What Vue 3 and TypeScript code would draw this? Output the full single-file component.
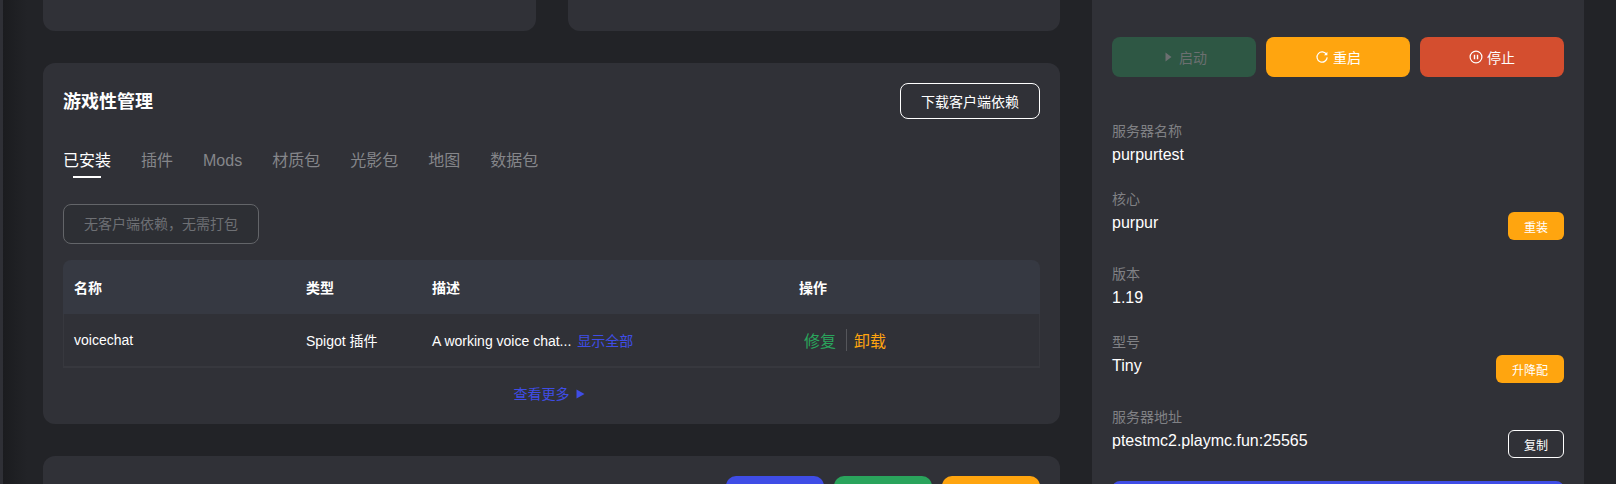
<script setup lang="ts">
interface Info { label: string; value: string; action?: string; kind?: string }
const tabs: string[] = ['已安装', '插件', 'Mods', '材质包', '光影包', '地图', '数据包']
const infos: Info[] = [
  { label: '服务器名称', value: 'purpurtest' },
  { label: '核心', value: 'purpur', action: '重装', kind: 'fill' },
  { label: '版本', value: '1.19' },
  { label: '型号', value: 'Tiny', action: '升降配', kind: 'fill' },
  { label: '服务器地址', value: 'ptestmc2.playmc.fun:25565', action: '复制', kind: 'line' },
]
</script>

<template>
  <div class="page">
    <div class="edge"></div>
    <main class="main">
      <div class="top-row">
        <div class="card stub"></div>
        <div class="card stub"></div>
      </div>

      <section class="card game">
        <header class="game-head">
          <h2>游戏性管理</h2>
          <button class="outline-btn">下载客户端依赖</button>
        </header>
        <nav class="tabs">
          <span v-for="(t, i) in tabs" :key="t" class="tab" :class="{ active: i === 0 }">{{ t }}</span>
        </nav>
        <div class="hint">无客户端依赖，无需打包</div>
        <div class="table">
          <div class="tr th">
            <div>名称</div><div>类型</div><div>描述</div><div>操作</div>
          </div>
          <div class="tr td">
            <div>voicechat</div>
            <div>Spigot 插件</div>
            <div>A working voice chat... <a class="link">显示全部</a></div>
            <div class="ops"><span class="fix">修复</span><i class="sep"></i><span class="del">卸载</span></div>
          </div>
        </div>
        <div class="more">查看更多<svg width="9" height="10" viewBox="0 0 9 10"><path d="M0.5 0.5 L8.5 5 L0.5 9.5 Z" fill="#3f4de6"/></svg></div>
      </section>

      <section class="card last">
        <div class="last-btns">
          <span class="tb blue"></span><span class="tb green"></span><span class="tb orange"></span>
        </div>
      </section>
    </main>

    <aside class="panel">
      <div class="power">
        <button class="pbtn start">
          <svg width="14" height="14" viewBox="0 0 14 14"><path d="M4.5 2.5 L10.5 7 L4.5 11.5 Z" fill="#6b6f70"/></svg>启动
        </button>
        <button class="pbtn restart">
          <svg width="14" height="14" viewBox="0 0 14 14" fill="none"><path d="M11.6 4.6 A5.1 5.1 0 1 0 12.2 7.4" stroke="#fff" stroke-width="1.2"/><path d="M12.4 1.8 V5.2 H9 Z" fill="#fff"/></svg>重启
        </button>
        <button class="pbtn stop">
          <svg width="14" height="14" viewBox="0 0 14 14" fill="none"><circle cx="7" cy="7" r="5.9" stroke="#fff" stroke-width="1.2"/><path d="M5.5 4.7 V9.3 M8.5 4.7 V9.3" stroke="#fff" stroke-width="1.4"/></svg>停止
        </button>
      </div>

      <div v-for="it in infos" :key="it.label" class="info">
        <div class="label">{{ it.label }}</div>
        <div class="row">
          <span class="value">{{ it.value }}</span>
          <button v-if="it.action" class="mini" :class="it.kind">{{ it.action }}</button>
        </div>
      </div>

      <div class="wide"></div>
    </aside>
  </div>
</template>

<style>
html, body { margin: 0; background: #222327; }
</style>

<style scoped>
.page {
  width: 1616px;
  height: 484px;
  overflow: hidden;
  display: flex;
  background: #222327;
  font-family: "Liberation Sans", "Noto Sans CJK SC", sans-serif;
  color: #fff;
}
.edge {
  width: 3px;
  flex: none;
  background: #2f3036;
}
.main {
  width: 1057px;
  flex: none;
  box-sizing: border-box;
  padding: 0 0 0 40px;
  background: linear-gradient(90deg, #1b1c1f 0, #222327 24px);
}
.top-row {
  display: flex;
  gap: 32px;
}
.card {
  background: #303137;
  border-radius: 12px;
}
.stub {
  flex: 1;
  height: 31px;
  border-radius: 0 0 12px 12px;
}
.game {
  margin-top: 32px;
  height: 361px;
  box-sizing: border-box;
  padding: 20px 20px 0;
}
.game-head {
  display: flex;
  justify-content: space-between;
  align-items: center;
}
h2 {
  margin: 0 0 2px;
  font-size: 18px;
  font-weight: 700;
}
button {
  font-family: inherit;
  cursor: pointer;
}
.outline-btn {
  width: 140px;
  height: 36px;
  background: transparent;
  border: 1px solid #fff;
  border-radius: 8px;
  color: #fff;
  font-size: 14px;
}
.tabs {
  display: flex;
  gap: 30px;
  margin-top: 28px;
}
.tab {
  position: relative;
  font-size: 16px;
  line-height: 28px;
  color: #85868a;
}
.tab.active { color: #fff; }
.tab.active::after {
  content: "";
  position: absolute;
  left: 10px;
  right: 10px;
  bottom: -3px;
  height: 2px;
  background: #fff;
}
.hint {
  width: 196px;
  height: 40px;
  box-sizing: border-box;
  margin-top: 29px;
  padding-left: 20px;
  line-height: 38px;
  border: 1px solid #636569;
  border-radius: 8px;
  background: #2d2f34;
  color: #6e7074;
  font-size: 14px;
}
.table {
  margin-top: 16px;
  font-size: 14px;
}
.tr {
  display: grid;
  grid-template-columns: 232px 126px 367px 1fr;
  padding-left: 11px;
  align-items: center;
}
.th {
  height: 54px;
  background: #363942;
  border-radius: 8px 8px 0 0;
  font-weight: 700;
}
.td {
  height: 54px;
  box-sizing: border-box;
  padding-left: 10px;
  border: 1px solid #37383e;
  border-top: 0;
  border-bottom-width: 2px;
}
.link { margin-left: 2px; color: #3f4de6; }
.ops {
  display: flex;
  align-items: center;
  padding-left: 5px;
  font-size: 16px;
}
.fix { color: #2aa45c; }
.del { color: #ffa50f; }
.sep {
  width: 1px;
  height: 22px;
  margin: 0 7px 0 10px;
  background: #55565b;
}
.more {
  display: flex;
  justify-content: center;
  align-items: center;
  gap: 6px;
  margin-top: 15px;
  padding-right: 5px;
  color: #3f4de6;
  font-size: 14px;
  line-height: 22px;
}
.last {
  margin-top: 32px;
  height: 120px;
  box-sizing: border-box;
  padding: 20px;
}
.last-btns {
  display: flex;
  justify-content: flex-end;
  gap: 10px;
}
.tb {
  width: 98px;
  height: 40px;
  border-radius: 10px;
}
.blue { background: #3f4de6; }
.green { background: #2aa45c; }
.orange { background: #ffa50f; }
.panel {
  width: 492px;
  height: 700px;
  flex: none;
  box-sizing: border-box;
  margin-left: 32px;
  padding: 37px 20px 0;
  background: #303137;
}
.power {
  display: flex;
  gap: 10px;
  margin-bottom: 43px;
}
.pbtn {
  flex: 1;
  height: 40px;
  display: flex;
  justify-content: center;
  align-items: center;
  gap: 4px;
  border: 0;
  border-radius: 8px;
  color: #fff;
  font-size: 14px;
}
.start { background: #2e5744; color: #6b6f70; }
.restart { background: #ffa50f; }
.stop { background: #d44e2f; }
.info { margin-bottom: 21px; }
.label {
  height: 23px;
  line-height: 22px;
  font-size: 14px;
  color: #808185;
}
.row {
  display: flex;
  justify-content: space-between;
  align-items: flex-start;
}
.value {
  font-size: 16px;
  line-height: 24px;
}
.mini {
  height: 28px;
  margin: 1px 0 2px;
  padding: 0 16px;
  border-radius: 6px;
  font-size: 12px;
  color: #fff;
  border: 0;
}
.mini.fill { background: #ffa50f; }
.mini.line { padding: 0 15px; background: transparent; border: 1px solid #fff; }
.wide {
  height: 40px;
  margin-top: 3px;
  border-radius: 8px;
  background: #3f4de6;
}
</style>
